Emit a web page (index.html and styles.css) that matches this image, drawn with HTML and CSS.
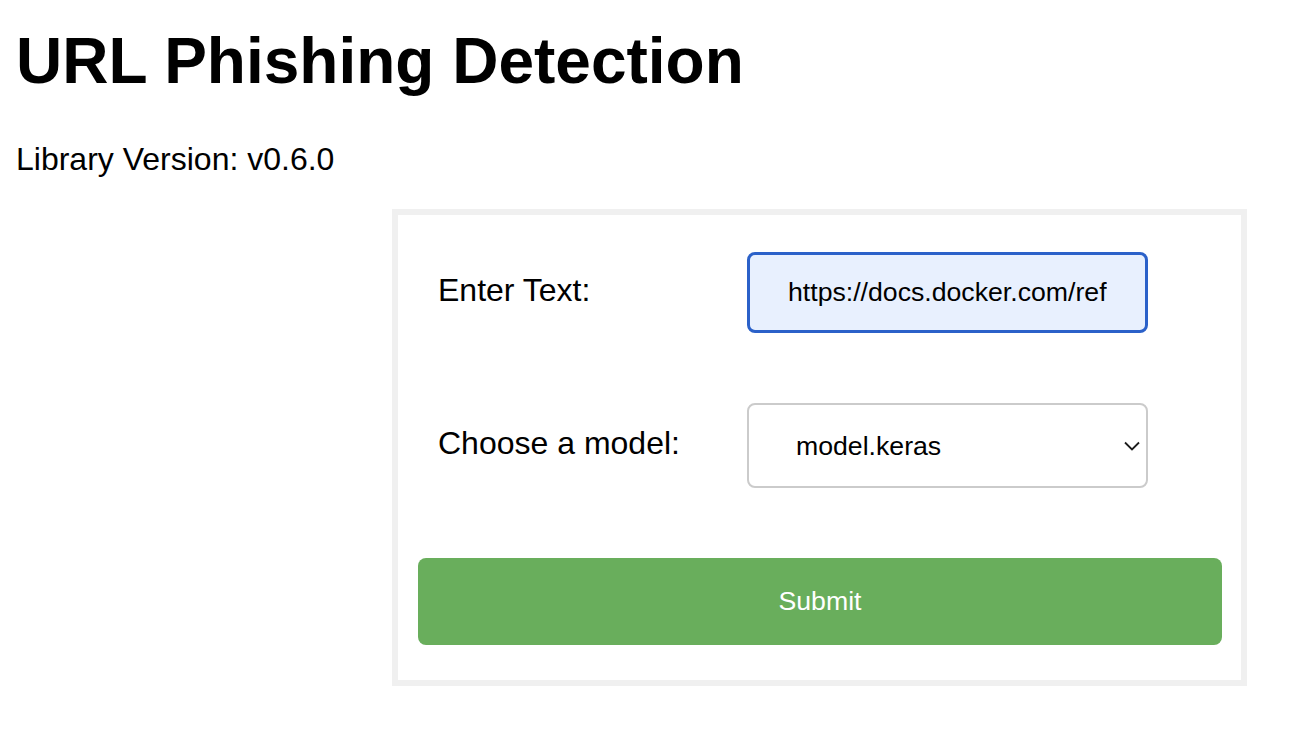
FILE: index.html
```html
<!DOCTYPE html>
<html lang="en">
<head>
<meta charset="utf-8">
<title>URL Phishing Detection</title>
<link rel="stylesheet" href="styles.css">
</head>
<body>
<h1 class="title">URL Phishing Detection</h1>
<p class="version">Library Version: v0.6.0</p>
<form class="card">
  <div class="row">
    <label class="label" for="text">Enter Text:</label>
    <input class="field text-field" id="text" type="text" value="https://docs.docker.com/ref">
  </div>
  <div class="row">
    <label class="label" for="model">Choose a model:</label>
    <div class="select-wrap">
      <select class="field select-field" id="model">
        <option>model.keras</option>
      </select>
      <svg class="chevron" width="16" height="10" viewBox="0 0 16 10" aria-hidden="true">
        <path d="M1 1.5 L8 8.5 L15 1.5" fill="none" stroke="#1c1c1c" stroke-width="1.8"/>
      </svg>
    </div>
  </div>
  <button class="submit" type="button">Submit</button>
</form>
</body>
</html>
```
FILE: styles.css
```css
html, body {
  margin: 0;
  padding: 0;
  background: #ffffff;
}
body {
  padding: 0 16px;
  font-family: "Liberation Sans", Arial, Helvetica, sans-serif;
  color: #000;
}
.title {
  font-size: 64px;
  line-height: 74px;
  font-weight: 700;
  margin: 24px 0 43px 0;
}
.version {
  font-size: 32px;
  line-height: 37px;
  margin: 0 0 31px 0;
}
.card {
  box-sizing: border-box;
  width: 855px;
  margin-left: 376px;
  border: 6px solid #f0f0f0;
  padding: 37px 19px 35px 20px;
  display: flex;
  flex-direction: column;
  gap: 70px;
}
.row {
  display: grid;
  grid-template-columns: 309px 401px;
  align-items: center;
  padding-left: 20px;
}
.label {
  font-size: 32px;
  line-height: 37px;
  margin-bottom: 5px;
}
.field {
  box-sizing: border-box;
  width: 401px;
  font-family: "Liberation Sans", Arial, Helvetica, sans-serif;
  font-size: 26.67px;
  color: #000;
  border-radius: 8px;
  outline: none;
  margin: 0;
}
.text-field {
  height: 81px;
  border: 3px solid #2b61c9;
  background: #e8f0fe;
  padding: 0 38px;
}
.select-wrap {
  position: relative;
  width: 401px;
}
.select-field {
  display: block;
  height: 85px;
  border: 2px solid #cbcbcb;
  background: #ffffff;
  padding: 0 40px 0 47px;
  -webkit-appearance: none;
  appearance: none;
}
.chevron {
  position: absolute;
  right: 8px;
  top: 38px;
}
.submit {
  display: block;
  width: 804px;
  height: 87px;
  border: none;
  border-radius: 8px;
  background: #69ae5c;
  color: #ffffff;
  font-family: "Liberation Sans", Arial, Helvetica, sans-serif;
  font-size: 26.67px;
  padding: 0;
  margin: 0;
}
```
